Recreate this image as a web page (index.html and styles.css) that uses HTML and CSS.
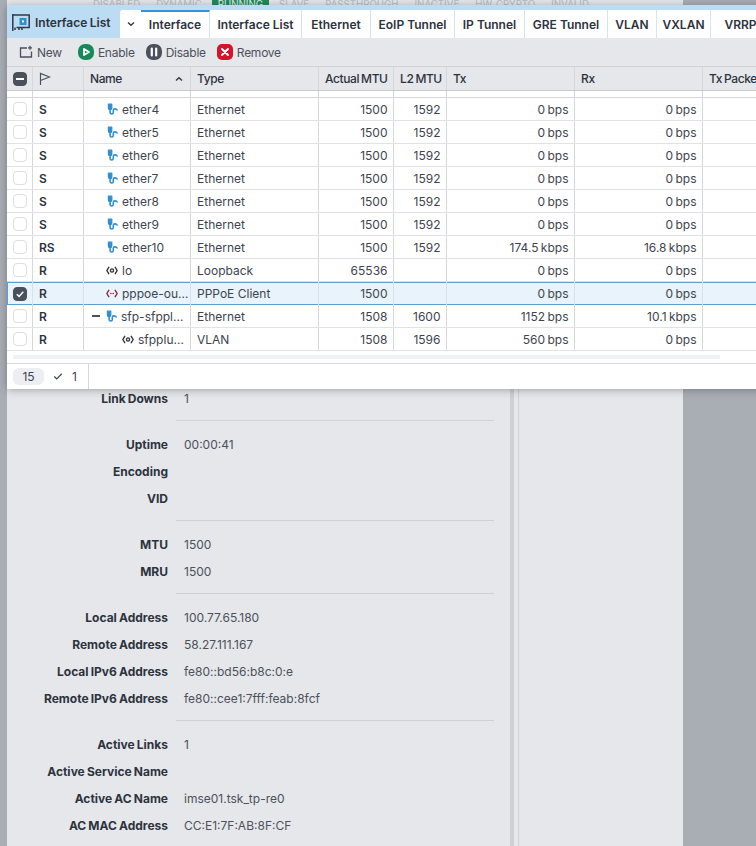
FILE: index.html
```html
<!DOCTYPE html>
<html lang="en">
<head>
<meta charset="utf-8">
<title>Interface List</title>
<link rel="stylesheet" href="styles.css">
</head>
<body>
<svg class="defs" width="0" height="0" aria-hidden="true">
  <symbol id="eth" viewBox="0 0 12 12">
    <path d="M1.4 1.2h3.4v3.8a1.7 1.7 0 0 1-3.4 0z" fill="#2f8fd0" stroke="#2f8fd0" stroke-width="1.2" stroke-linejoin="round"/>
    <path d="M3.1 6.5v3c0 2 3.2 2 3.2 0V7.3c0-1.8 3-1.9 3.8-.3" fill="none" stroke="#2f8fd0" stroke-width="1.6" stroke-linecap="round"/>
  </symbol>
  <symbol id="loop" viewBox="0 0 13 9">
    <circle cx="6.5" cy="4.5" r="1.7" fill="none" stroke="#2c333e" stroke-width="1.5"/>
    <path d="M3 1 .9 4.5 3 8M10 1l2.1 3.5L10 8" fill="none" stroke="#2c333e" stroke-width="1.5" stroke-linecap="round" stroke-linejoin="round"/>
  </symbol>
</svg>

<div class="backdrop">
  <div class="legend">
    <span>DISABLED</span><span>DYNAMIC</span><span class="on">RUNNING</span><span>SLAVE</span><span>PASSTHROUGH</span><span>INACTIVE</span><span>HW_CRYPTO</span><span>INVALID</span>
  </div>
  <div class="details">
    <div class="form">
      <div class="row"><b>Link Downs</b><span>1</span></div>
      <hr>
      <div class="row"><b>Uptime</b><span>00:00:41</span></div>
      <div class="row"><b>Encoding</b><span></span></div>
      <div class="row"><b>VID</b><span></span></div>
      <hr>
      <div class="row"><b>MTU</b><span>1500</span></div>
      <div class="row"><b>MRU</b><span>1500</span></div>
      <hr>
      <div class="row"><b>Local Address</b><span>100.77.65.180</span></div>
      <div class="row"><b>Remote Address</b><span>58.27.111.167</span></div>
      <div class="row"><b>Local IPv6 Address</b><span>fe80::bd56:b8c:0:e</span></div>
      <div class="row"><b>Remote IPv6 Address</b><span>fe80::cee1:7fff:feab:8fcf</span></div>
      <hr>
      <div class="row"><b>Active Links</b><span>1</span></div>
      <div class="row"><b>Active Service Name</b><span></span></div>
      <div class="row"><b>Active AC Name</b><span>imse01.tsk_tp-re0</span></div>
      <div class="row"><b>AC MAC Address</b><span>CC:E1:7F:AB:8F:CF</span></div>
    </div>
    <div class="divider"></div>
    <div class="side"></div>
  </div>
</div>

<section class="window">
  <header class="tabbar">
    <div class="wintitle">
      <svg class="wicon" viewBox="0 0 18 17"><path d="M.8 0v17M.8 1h16.4v12.5H4.5M3 13.5V16M7 14v2M10 14v2" fill="none" stroke="#2f3946" stroke-width="1.5"/><rect x="7.5" y="4" width="7" height="7" fill="#2f8fd0"/><rect x="10" y="6.4" width="2" height="2" fill="#fff"/></svg>
      <span>Interface List</span>
    </div>
    <div class="chev"><svg viewBox="0 0 10 6"><path d="M2 1.5 5 4.3l3-2.8" fill="none" stroke="#333b47" stroke-width="1.4"/></svg></div>
    <nav class="tabs">
      <span class="tab active">Interface</span><span class="tab">Interface List</span><span class="tab">Ethernet</span><span class="tab">EoIP Tunnel</span><span class="tab">IP Tunnel</span><span class="tab">GRE Tunnel</span><span class="tab">VLAN</span><span class="tab">VXLAN</span><span class="tab">VRRP</span>
    </nav>
  </header>
  <div class="toolbar">
    <span class="tool first"><svg class="ti" viewBox="0 0 14 14"><path d="M8 3H1.5v9h11V6.5" fill="none" stroke="#4a515c" stroke-width="1.3"/><path d="M11 .8v4M9 2.8h4" stroke="#4a515c" stroke-width="1.3"/></svg>New</span>
    <span class="tool"><i class="round green"><svg viewBox="0 0 16 16"><path d="M6 5 11 8l-5 3z" fill="none" stroke="#fff" stroke-width="1.8" stroke-linejoin="round"/></svg></i>Enable</span>
    <span class="tool"><i class="round slate"><svg viewBox="0 0 16 16"><path d="M5.8 4.5v7M10.2 4.5v7" stroke="#fff" stroke-width="2.2" stroke-linecap="round"/></svg></i>Disable</span>
    <span class="tool"><i class="round red"><svg viewBox="0 0 16 16"><path d="M5 5l6 6M11 5l-6 6" stroke="#fff" stroke-width="2" stroke-linecap="round"/></svg></i>Remove</span>
  </div>
  <div class="grid head">
    <div class="c c-check"><i class="box minus"></i></div>
    <div class="c c-flag"><svg class="flag" viewBox="0 0 12 14"><path d="M1.5 13V1.5l9 3.5-9 3.5" fill="none" stroke="#4a515c" stroke-width="1.2"/></svg></div>
    <div class="c c-name">Name<svg class="sort" viewBox="0 0 10 6"><path d="M2 4.5 5 1.7l3 2.8" fill="none" stroke="#333b47" stroke-width="1.4"/></svg></div>
    <div class="c c-type">Type</div>
    <div class="c c-mtu">Actual MTU</div>
    <div class="c c-l2">L2 MTU</div>
    <div class="c c-tx">Tx</div>
    <div class="c c-rx">Rx</div>
    <div class="c c-pk">Tx Packet</div>
  </div>
  <div class="sliver"><div class="c-check"></div><div class="c-flag"></div><div class="c-name"></div><div class="c-type"></div><div class="c-mtu"></div><div class="c-l2"></div><div class="c-tx"></div><div class="c-rx"></div></div>

  <div class="grid body"><div class="c c-check"><i class="box"></i></div><div class="c c-flag">S</div><div class="c c-name"><svg class="if eth"><use href="#eth"/></svg>ether4</div><div class="c c-type">Ethernet</div><div class="c c-mtu num">1500</div><div class="c c-l2 num">1592</div><div class="c c-tx num">0 bps</div><div class="c c-rx num">0 bps</div><div class="c c-pk"></div></div>
  <div class="grid body"><div class="c c-check"><i class="box"></i></div><div class="c c-flag">S</div><div class="c c-name"><svg class="if eth"><use href="#eth"/></svg>ether5</div><div class="c c-type">Ethernet</div><div class="c c-mtu num">1500</div><div class="c c-l2 num">1592</div><div class="c c-tx num">0 bps</div><div class="c c-rx num">0 bps</div><div class="c c-pk"></div></div>
  <div class="grid body"><div class="c c-check"><i class="box"></i></div><div class="c c-flag">S</div><div class="c c-name"><svg class="if eth"><use href="#eth"/></svg>ether6</div><div class="c c-type">Ethernet</div><div class="c c-mtu num">1500</div><div class="c c-l2 num">1592</div><div class="c c-tx num">0 bps</div><div class="c c-rx num">0 bps</div><div class="c c-pk"></div></div>
  <div class="grid body"><div class="c c-check"><i class="box"></i></div><div class="c c-flag">S</div><div class="c c-name"><svg class="if eth"><use href="#eth"/></svg>ether7</div><div class="c c-type">Ethernet</div><div class="c c-mtu num">1500</div><div class="c c-l2 num">1592</div><div class="c c-tx num">0 bps</div><div class="c c-rx num">0 bps</div><div class="c c-pk"></div></div>
  <div class="grid body"><div class="c c-check"><i class="box"></i></div><div class="c c-flag">S</div><div class="c c-name"><svg class="if eth"><use href="#eth"/></svg>ether8</div><div class="c c-type">Ethernet</div><div class="c c-mtu num">1500</div><div class="c c-l2 num">1592</div><div class="c c-tx num">0 bps</div><div class="c c-rx num">0 bps</div><div class="c c-pk"></div></div>
  <div class="grid body"><div class="c c-check"><i class="box"></i></div><div class="c c-flag">S</div><div class="c c-name"><svg class="if eth"><use href="#eth"/></svg>ether9</div><div class="c c-type">Ethernet</div><div class="c c-mtu num">1500</div><div class="c c-l2 num">1592</div><div class="c c-tx num">0 bps</div><div class="c c-rx num">0 bps</div><div class="c c-pk"></div></div>
  <div class="grid body"><div class="c c-check"><i class="box"></i></div><div class="c c-flag">RS</div><div class="c c-name"><svg class="if eth"><use href="#eth"/></svg>ether10</div><div class="c c-type">Ethernet</div><div class="c c-mtu num">1500</div><div class="c c-l2 num">1592</div><div class="c c-tx num">174.5 kbps</div><div class="c c-rx num">16.8 kbps</div><div class="c c-pk"></div></div>
  <div class="grid body"><div class="c c-check"><i class="box"></i></div><div class="c c-flag">R</div><div class="c c-name"><svg class="if lp"><use href="#loop"/></svg>lo</div><div class="c c-type">Loopback</div><div class="c c-mtu num">65536</div><div class="c c-l2 num"></div><div class="c c-tx num">0 bps</div><div class="c c-rx num">0 bps</div><div class="c c-pk"></div></div>
  <div class="grid body selected"><div class="c c-check"><i class="box checked"><svg viewBox="0 0 14 14"><path d="M3.2 7.2 6 9.8l4.8-5.4" fill="none" stroke="#fff" stroke-width="1.7"/></svg></i></div><div class="c c-flag">R</div><div class="c c-name"><svg class="if lp" viewBox="0 0 13 9"><path d="M3 1 .9 4.5 3 8M10 1l2.1 3.5L10 8" fill="none" stroke="#8e2433" stroke-width="1.5" stroke-linecap="round" stroke-linejoin="round"/><path d="M5.2 4.5h.1M7.8 4.5h.1" stroke="#8e2433" stroke-width="1.7" stroke-linecap="round"/></svg>pppoe-ou...</div><div class="c c-type">PPPoE Client</div><div class="c c-mtu num">1500</div><div class="c c-l2 num"></div><div class="c c-tx num">0 bps</div><div class="c c-rx num">0 bps</div><div class="c c-pk"></div></div>
  <div class="grid body"><div class="c c-check"><i class="box"></i></div><div class="c c-flag">R</div><div class="c c-name"><span class="tree"></span><svg class="if eth"><use href="#eth"/></svg>sfp-sfppl...</div><div class="c c-type">Ethernet</div><div class="c c-mtu num">1508</div><div class="c c-l2 num">1600</div><div class="c c-tx num">1152 bps</div><div class="c c-rx num">10.1 kbps</div><div class="c c-pk"></div></div>
  <div class="grid body"><div class="c c-check"><i class="box"></i></div><div class="c c-flag">R</div><div class="c c-name deep"><svg class="if lp"><use href="#loop"/></svg>sfpplu...</div><div class="c c-type">VLAN</div><div class="c c-mtu num">1508</div><div class="c c-l2 num">1596</div><div class="c c-tx num">560 bps</div><div class="c c-rx num">0 bps</div><div class="c c-pk"></div></div>

  <div class="scrollzone"><div class="scrollthumb"></div></div>
  <footer class="status">
    <div class="counts"><span class="pill">15</span><svg class="tick" viewBox="0 0 12 10"><path d="M1.5 5 4.5 8l6-6.3" fill="none" stroke="#3d4450" stroke-width="1.4"/></svg><span>1</span></div>
  </footer>
</section>
</body>
</html>
```
FILE: styles.css
```css
* { box-sizing: border-box; }
html, body { margin: 0; padding: 0; height: 100%; }
body {
  width: 756px;
  height: 846px;
  overflow: hidden;
  position: relative;
  background: #a9adb4;
  font-family: Inter, "Liberation Sans", sans-serif;
  font-size: 12px;
  color: #3d4450;
}
.defs { position: absolute; }

.backdrop {
  width: 676px;
  height: 846px;
  margin-left: 7px;
  background: #e6e7ea;
  display: flex;
  flex-direction: column;
}
.legend {
  height: 5px;
  display: flex;
  gap: 16px;
  padding-left: 86px;
  font-size: 9.7px;
  line-height: 9px;
  color: #b9bcc2;
  overflow: hidden;
  white-space: nowrap;
}
.legend .on { background: #1f8a5b; color: #e6f3ec; padding: 0 6px; margin: 0 -6px; }
.details { flex: 1; display: flex; padding-top: 380px; }
.form { width: 503px; word-spacing: -.7px; }
.row { display: flex; height: 27px; align-items: center; }
.row b { width: 161px; text-align: right; font-weight: 700; color: #2c333e; white-space: nowrap; }
.row span { margin-left: 16px; color: #4a515c; white-space: nowrap; }
.form hr { border: 0; height: 1px; background: #cfd1d5; margin: 8px 16px 10px 169px; }
.divider { width: 9px; border-left: 4px solid #cfd0d4; border-right: 1px solid #cfd0d4; }

.window {
  position: absolute;
  left: 7px;
  top: 5px;
  width: 760px;
  height: 384px;
  background: #fff;
  box-shadow: 0 1px 8px rgba(30,35,45,.35);
  overflow: hidden;
}
.tabbar { display: flex; height: 33px; background: #bcdcf4; }
.wintitle { flex: none; width: 113px; display: flex; align-items: center; gap: 5px; padding: 2px 0 0 5px; font-weight: 600; color: #2c333e; white-space: nowrap; word-spacing: -.5px; }
.wicon { width: 18px; height: 17px; flex: none; }
.chev { flex: none; width: 21px; background: #fff; margin-top: 5px; border-radius: 3px 0 0 0; display: flex; align-items: center; justify-content: center; }
.chev svg { width: 10px; height: 6px; }
.tabs { flex: none; display: grid; grid-template-columns: 69px 92px 69px 84px 70px 83px 49px 54px 60px; margin-top: 5px; }
.tab { height: 28px; line-height: 29px; text-align: center; background: #fff; border-right: 1px solid #d3e3f0; font-weight: 600; color: #2c333e; white-space: nowrap; }
.tab.active { border-top: 2px solid #2f93de; line-height: 26px; }

.toolbar { height: 28px; background: #e6e7ea; display: flex; align-items: center; gap: 11px; padding-left: 12px; color: #4a515c; letter-spacing: -.25px; }
.tool { display: inline-flex; align-items: center; gap: 4px; }
.tool.first { gap: 4px; margin-right: 5px; }
.ti { width: 14px; height: 14px; }
.round { width: 16px; height: 16px; border-radius: 7px; display: block; }
.round svg { display: block; width: 16px; height: 16px; }
.green { background: #158a58; }
.slate { background: #4a515c; }
.red { background: #d5132a; border-radius: 5px; }

.grid { display: flex; }
.c, .sliver > div { border-right: 1px solid #d5d7da; flex: none; }
.c { display: flex; align-items: center; padding: 0 6px; white-space: nowrap; }
.c-check { width: 26px; justify-content: center; padding: 0; }
.c-flag { width: 51px; }
.c-name { width: 107px; }
.c-type { width: 128px; }
.c-mtu { width: 75px; }
.c-l2 { width: 53px; }
.c-tx { width: 128px; }
.c-rx { width: 128px; }
.c-pk { flex: 1; border-right: 0; }

.head { height: 25px; background: #e6e7ea; border-top: 1px solid #d0d2d6; border-bottom: 1px solid #c8cad0; font-weight: 500; color: #2c333e; word-spacing: -.8px; letter-spacing: -.4px; }
.head .c-name { justify-content: space-between; }
.flag { width: 12px; height: 14px; }
.sort { width: 10px; height: 6px; }
.sliver { display: flex; height: 7px; border-bottom: 1px solid #d5d7da; }

.body { height: 23px; border-bottom: 1px solid #e0e2e5; color: #3d4450; }
.body .c-flag { font-weight: 600; color: #2c333e; padding-left: 6px; }
.body .c-name { padding-left: 23px; gap: 3px; }
.body .c-name.deep { padding-left: 39px; }
.num { justify-content: flex-end; word-spacing: -1px; padding-right: 5.5px; }
.box { width: 14px; height: 14px; border-radius: 4px; border: 1px solid #dcdee1; background: #fff; display: block; }
.box.minus { background: #4a515c; border-color: #4a515c; position: relative; }
.box.minus::after { content: ""; position: absolute; left: 2px; right: 2px; top: 5px; height: 2px; background: #fff; }
.box.checked { background: #4a515c; border-color: #4a515c; }
.box.checked svg { display: block; width: 12px; height: 12px; }
.if { flex: none; }
.if.eth { width: 12px; height: 12px; }
.if.lp { width: 12px; height: 9px; margin: 0 1px 0 -1px; }
.tree { width: 8px; height: 2px; background: #4a515c; margin: 0 3px 0 -15px; flex: none; }
.selected { background: #e9f3fb; box-shadow: inset 0 0 0 1px #5a9fd0; border-bottom: 0; }
.selected .c { border-right-color: #d5e2ec; }

.scrollzone { height: 13px; padding: 4px 0; border-bottom: 1px solid #d5d7da; }
.scrollthumb { width: 707px; height: 4px; margin-left: 6px; background: #f0f1f3; }
.status { height: 25px; display: flex; }
.counts { width: 82px; display: flex; align-items: center; gap: 9px; padding-left: 6px; border-right: 1px solid #d5d7da; }
.pill { background: #eceef1; border-radius: 6px; padding: 0 8px; height: 17px; line-height: 17px; width: 31px; text-align: center; }
.tick { width: 10px; height: 9px; }
```
